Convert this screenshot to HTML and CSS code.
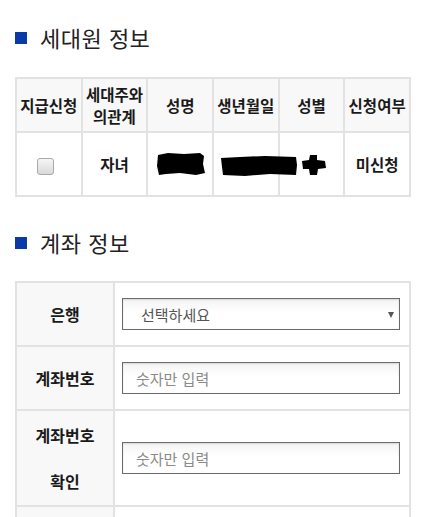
FILE: index.html
```html
<!DOCTYPE html>
<html lang="ko">
<head>
<meta charset="utf-8">
<link rel="stylesheet" href="styles.css">
</head>
<body>
<div class="page">
  <h2 class="sec-title first"><span class="sq"></span>세대원 정보</h2>
  <table class="members">
    <thead>
      <tr>
        <th>지급신청</th>
        <th>세대주와<br>의관계</th>
        <th>성명</th>
        <th>생년월일</th>
        <th>성별</th>
        <th>신청여부</th>
      </tr>
    </thead>
    <tbody>
      <tr>
        <td><span class="chk"></span></td>
        <td>자녀</td>
        <td class="redact-cell">
          <svg class="blob" width="50" height="26" viewBox="0 0 50 26"><path d="M2 4 L12 2 L28 3 L44 2 L48 5 L47 13 L49 22 L40 24 L24 22 L10 23 L3 24 L1 15 Z" fill="#000"/></svg>
        </td>
        <td class="redact-cell">
          <svg class="blob2" width="78" height="22" viewBox="0 0 78 22"><path d="M1 3 L20 2 L45 1 L76 2 L77 10 L76 20 L50 19 L25 21 L3 20 L2 12 Z" fill="#000"/></svg>
        </td>
        <td class="redact-cell">
          <svg class="blob3" width="26" height="22" viewBox="0 0 26 22"><path d="M9 1 L16 1 L16 6 L24 7 L25 14 L17 15 L16 21 L9 21 L8 15 L2 15 L1 7 L8 6 Z" fill="#000"/></svg>
        </td>
        <td>미신청</td>
      </tr>
    </tbody>
  </table>

  <h2 class="sec-title second"><span class="sq"></span>계좌 정보</h2>
  <table class="account">
    <tbody>
      <tr>
        <th>은행</th>
        <td>
          <span class="sel-wrap">
            <select class="sel"><option>선택하세요</option></select>
          </span>
        </td>
      </tr>
      <tr>
        <th>계좌번호</th>
        <td><input class="txt" type="text" placeholder="숫자만 입력"></td>
      </tr>
      <tr>
        <th class="two">계좌번호<br>확인</th>
        <td><input class="txt" type="text" placeholder="숫자만 입력"></td>
      </tr>
      <tr>
        <th>&nbsp;</th>
        <td>&nbsp;</td>
      </tr>
    </tbody>
  </table>
</div>
</body>
</html>
```

FILE: styles.css
```css
html, body {
  margin: 0;
  padding: 0;
  background: #fff;
}
body {
  font-family: "Noto Sans CJK KR", "Noto Sans", sans-serif;
  color: #222;
}
.page {
  padding: 0 20px 0 15px;
}
.sec-title {
  display: flex;
  align-items: center;
  font-size: 22px;
  font-weight: 400;
  line-height: 30px;
  height: 30px;
  margin: 0;
  color: #222;
  letter-spacing: 0.5px;
}
.sec-title.first {
  margin-top: 22px;
  margin-bottom: 25px;
}
.sec-title.second {
  margin-top: 30px;
  margin-bottom: 24px;
}
.sq {
  display: inline-block;
  width: 12px;
  height: 12px;
  background: #0a3aa8;
  margin-right: 13px;
  margin-top: 1px;
}
table {
  border-collapse: collapse;
  width: 396px;
  table-layout: fixed;
}
.members th, .members td {
  border: 2px solid #e2e2e2;
  text-align: center;
  vertical-align: middle;
  font-size: 15.5px;
  padding: 0;
  color: #1a1a1a;
}
.members th {
  background: #f8f8f8;
  height: 52px;
  font-weight: 700;
  line-height: 22px;
}
.members td {
  background: #fff;
  height: 62px;
  font-weight: 700;
}
.chk {
  display: inline-block;
  width: 15px;
  height: 15px;
  border: 1px solid #a9a9a9;
  border-radius: 3px;
  background: linear-gradient(#f6f6f6, #d9d9d9);
  vertical-align: middle;
  margin-top: 1px;
  margin-right: 6px;
}
.redact-cell {
  position: relative;
}
.blob {
  display: block;
  margin: 0 0 0 8px;
}
.blob2 {
  position: absolute;
  left: 6px;
  top: 22px;
  z-index: 2;
}
.blob3 {
  display: block;
  margin: 1px 0 0 21px;
}
.account th, .account td {
  border: 2px solid #e2e2e2;
  vertical-align: middle;
  padding: 0;
}
.account th {
  width: 96px;
  background: #f8f8f8;
  font-size: 16px;
  font-weight: 700;
  color: #1a1a1a;
  text-align: center;
  line-height: 46px;
}
.account th.two {
  line-height: 46px;
  padding: 1px 0;
}
.account td {
  background: #fff;
  padding: 15px 7px;
}
.sel-wrap {
  position: relative;
  display: block;
  width: 278px;
}
.sel-wrap::after {
  content: "";
  position: absolute;
  right: 6px;
  top: 14px;
  border-left: 3px solid transparent;
  border-right: 3px solid transparent;
  border-top: 6px solid #555;
}
.sel, .txt {
  display: block;
  box-sizing: border-box;
  width: 278px;
  height: 32px;
  margin: 0;
  border: 1px solid #6a6a6a;
  border-radius: 0;
  background: linear-gradient(#f4f4f4, #ffffff 45%, #ffffff);
  box-shadow: inset 0 1px 2px rgba(0,0,0,0.12);
  font-family: "Noto Sans CJK KR", "Noto Sans", sans-serif;
  font-size: 15px;
  color: #555;
  outline: none;
}
.sel {
  -webkit-appearance: none;
  appearance: none;
  padding: 0 0 0 18px;
}
.txt {
  padding: 0 0 0 13px;
}
.txt::placeholder {
  color: #8a8a8a;
}
```
